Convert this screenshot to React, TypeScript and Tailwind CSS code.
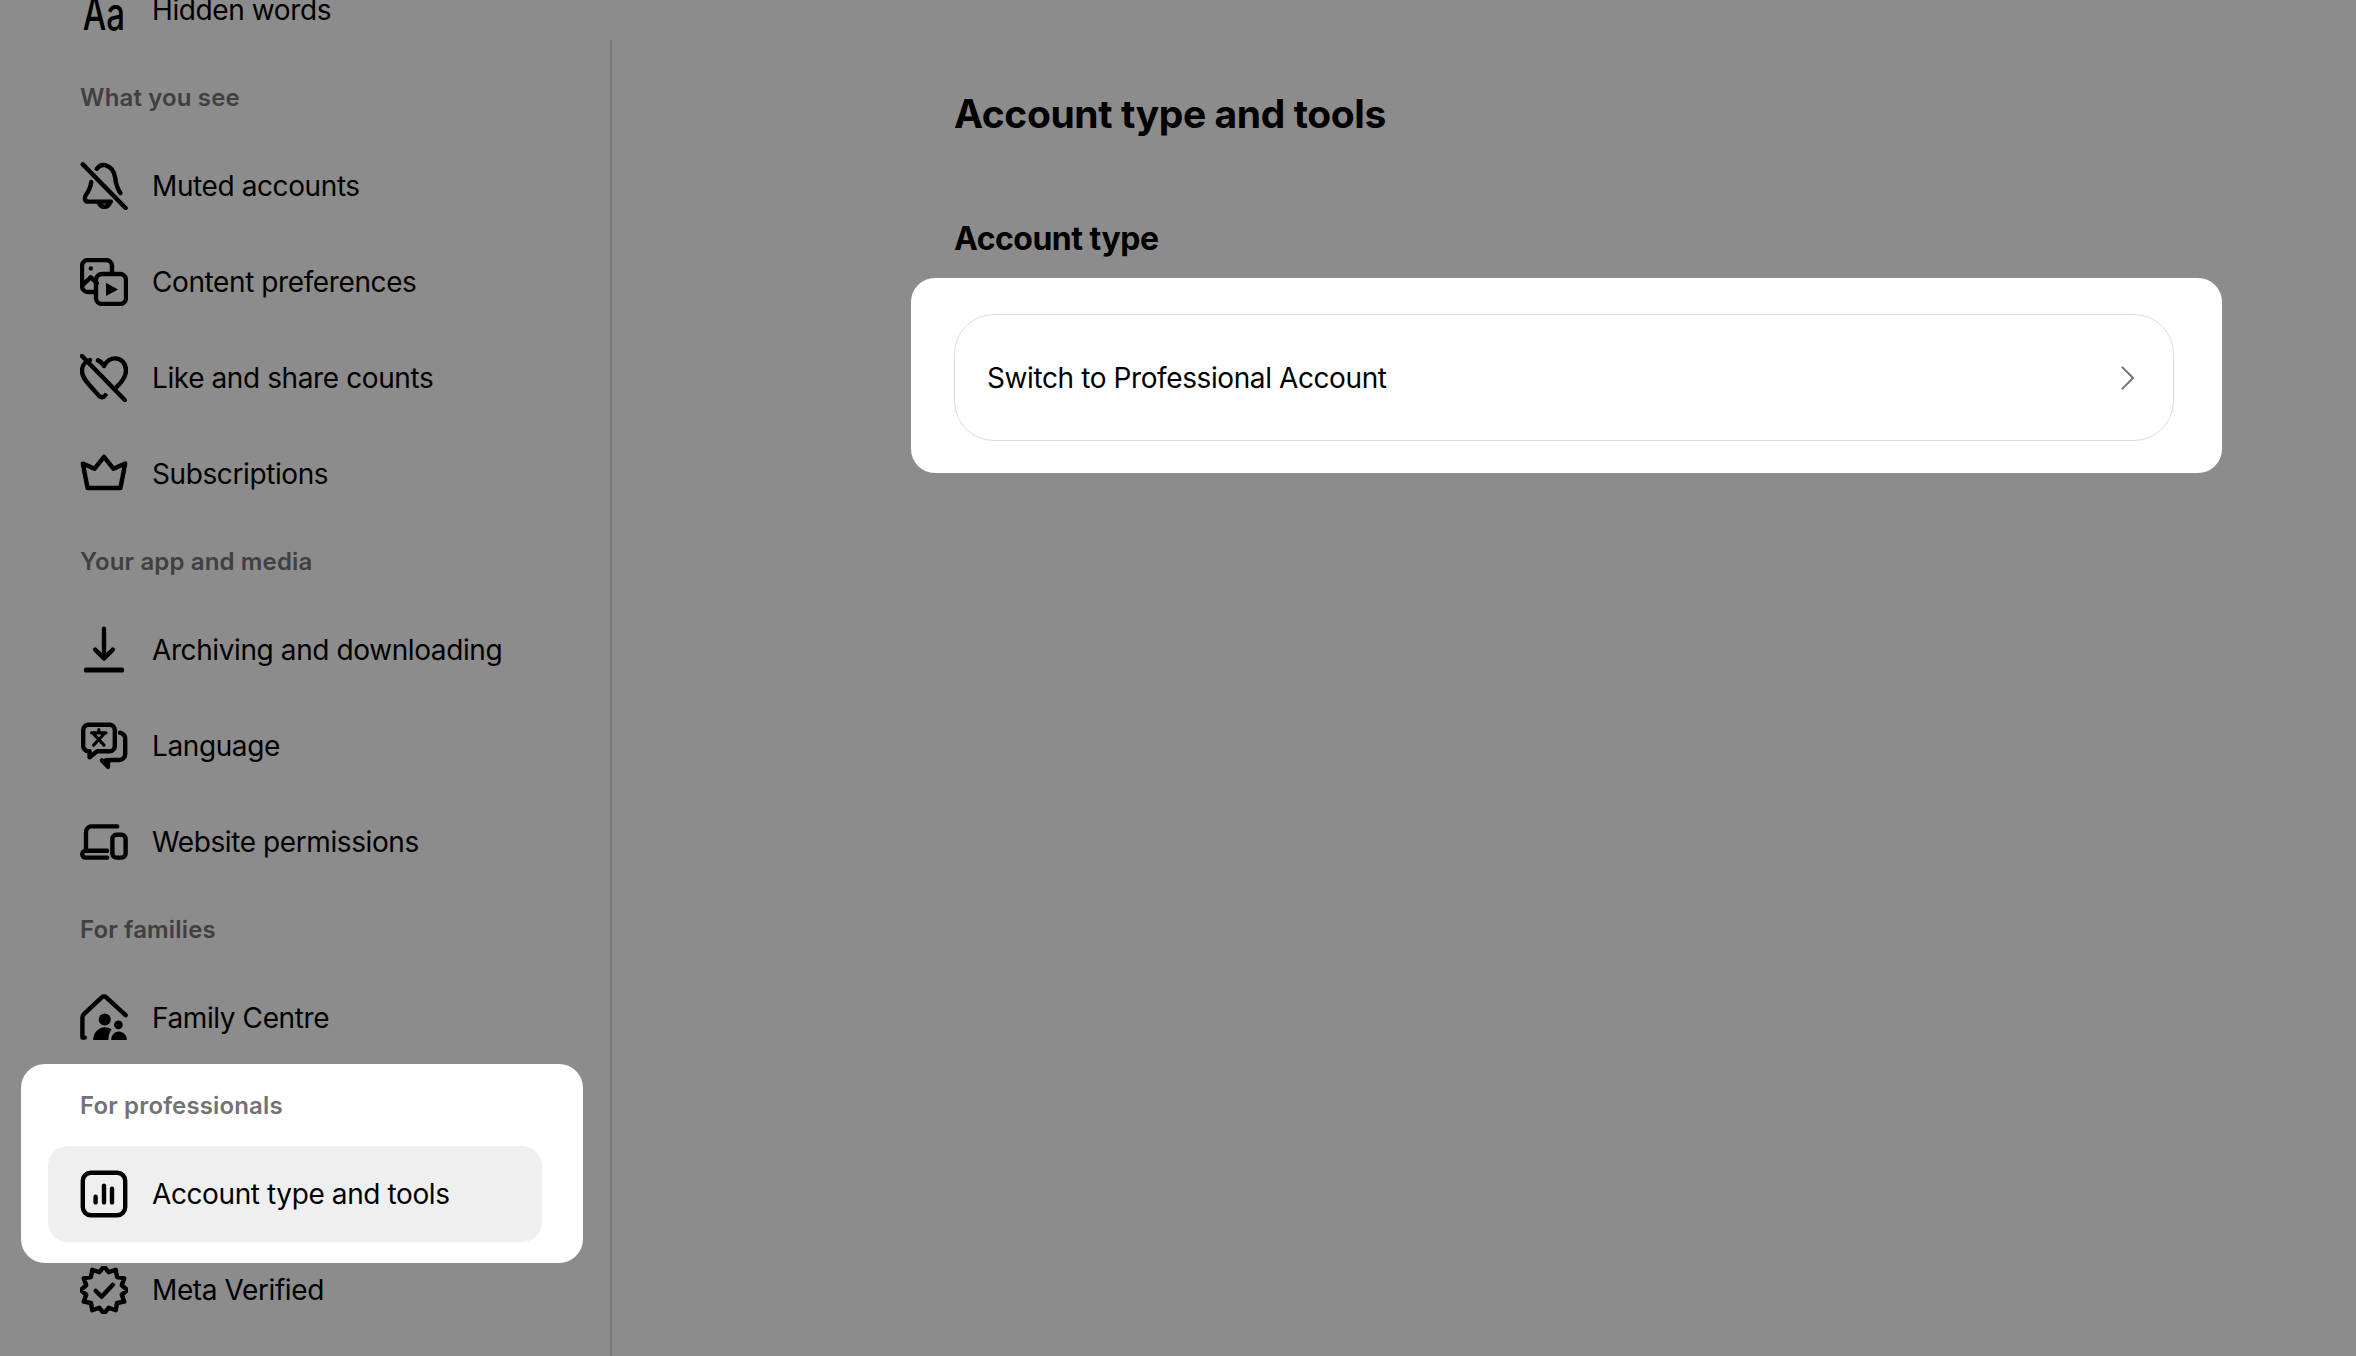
import type { ReactNode } from "react";

const font = { fontFamily: "Inter, 'Noto Sans', sans-serif" };

// 12 point scalloped badge for Meta Verified
const badgePoints = Array.from({ length: 24 }, (_, i) => {
  const r = i % 2 === 0 ? 11.7 : 9.2;
  const a = (i * Math.PI) / 12 - Math.PI / 2;
  return `${(12 + r * Math.cos(a)).toFixed(2)},${(12 + r * Math.sin(a)).toFixed(2)}`;
}).join(" ");

function Icon({ children }: { children: ReactNode }) {
  return (
    <svg viewBox="0 0 24 24" fill="none" stroke="black" strokeWidth={2.200} strokeLinecap="round" strokeLinejoin="round" className="w-12 h-12 shrink-0">
      {children}
    </svg>
  );
}

function Row({ icon, label, active }: { icon: ReactNode; label: string; active?: boolean }) {
  return (
    <div className={`flex items-center gap-6 h-24 w-[494px] pl-8 rounded-[20px] ${active ? "bg-[#efefef]" : ""}`}>
      {icon}
      <span className="text-[28px] tracking-[-0.4px] leading-[38px] text-black">{label}</span>
    </div>
  );
}

function Label({ text, light }: { text: string; light?: boolean }) {
  return (
    <div className={`h-20 flex items-center text-[24px] tracking-[0.15px] font-semibold ${light ? "text-[#737373]" : "text-[#404040]"}`}>
      {text}
    </div>
  );
}

const muted = (
  <Icon>
    <path d="M1.400 1.200 22.800 23" />
    <path d="M8.400 3.400C9.400 2 11 1.200 12.600 1.600c3 .8 4.600 3.400 5 6.400.3 2.800 1 5 2.600 7.600" />
    <path d="M5.600 10c-.3 2.800-1.400 4.800-2.800 6.800-.8 1.200-.4 3 1.200 3h11.400" />
    <path d="M9.400 20c.3 1.400 1.300 2.400 2.800 2.400s2.500-1 2.800-2.400" />
  </Icon>
);

const content = (
  <Icon>
    <path d="M7.600 17H4a3 3 0 0 1-3-3V4a3 3 0 0 1 3-3h9a3 3 0 0 1 3 3v3.600" />
    <path d="M1.400 13.400 5.400 9.600l3 3" />
    <circle cx="5.400" cy="5.200" r="1.100" fill="black" stroke="none" />
    <rect x="8" y="8" width="15" height="15" rx="3" />
    <path d="M13 12.400v6.600l6-3.300z" fill="black" stroke="none" />
  </Icon>
);

const likes = (
  <Icon>
    <path d="M1 1 22.400 23" />
    <path d="M5 3C2.800 3.600 1 5.600 1 8.400c0 3 1.800 5 3.800 7.200l4.600 5.200c1.200 1.200 2.400 1 3.300-.2" />
    <path d="M9 3.200c1 .4 2.200 1.400 3 2.800 1.200-2.400 3.200-3.800 5.600-3.800 3 0 5.400 2.400 5.400 6 0 3.200-1.800 5.600-4.800 8.400" />
  </Icon>
);

const crown = (
  <Icon>
    <path d="M12 3.400 16.800 9.400 22.600 6.800 20.200 19H3.800L1.400 6.800 7.200 9.400z" />
  </Icon>
);

const download = (
  <Icon>
    <path d="M12 1.400V16" />
    <path d="M7.600 11.800 12 16.200l4.400-4.400" />
    <path d="M3.200 22h17.600" strokeWidth={2.600} />
  </Icon>
);

const language = (
  <Icon>
    <path d="M4.200 1.400h10.600a2.600 2.600 0 0 1 2.600 2.600v8a2.600 2.600 0 0 1-2.600 2.600H8.600l-3.800 3V14.600H4.200a2.600 2.600 0 0 1-2.600-2.600V4a2.600 2.600 0 0 1 2.600-2.600z" />
    <path d="M20 5.400c1.500.2 2.600 1.400 2.600 3v7.600a3 3 0 0 1-3 3H16l-3 .1" />
    <path d="M11 19.200l3 3.200v-3.400" />
    <path d="M5.800 5.400h7.200M9.400 3.800v1.600M6.800 11.600 12 6M6.800 6l5.200 5.600" strokeWidth={1.600} />
  </Icon>
);

const devices = (
  <Icon>
    <path d="M3 16V7a2.800 2.800 0 0 1 2.800-2.800H18.600" />
    <path d="M13.600 16.400H2.800a1.500 1.500 0 0 0 0 3.400h10.800" />
    <rect x="16.200" y="8.400" width="6.600" height="11.400" rx="2" />
  </Icon>
);

const family = (
  <Icon>
    <path d="M22.800 10.600 13 1.600a1.500 1.500 0 0 0-2 0L2.200 9.800a3 3 0 0 0-1 2.200v9.800h1.200" />
    <circle cx="12.400" cy="12.800" r="3" fill="black" stroke="none" />
    <circle cx="19.200" cy="15.400" r="2.200" fill="black" stroke="none" />
    <path d="M6.600 23c0-3.600 2.600-6.400 5.800-6.400 1.400 0 2.600.4 3.400 1.200-1 1.200-1.600 3-1.600 5.200z" fill="black" stroke="none" />
    <path d="M15.600 23c0-2.400 1.600-4.200 3.800-4.200s4 1.800 4 4.200z" fill="black" stroke="none" />
  </Icon>
);

const tools = (
  <Icon>
    <rect x="1.400" y="1.400" width="21.200" height="21.200" rx="4" />
    <path d="M7.800 13.400v2.800M12 7.800v8.400M16 9.400v6.800" />
  </Icon>
);

const verified = (
  <Icon>
    <polygon points={badgePoints} />
    <path d="M7.800 12.400 10.800 15.400 16.400 9.400" />
  </Icon>
);

const aa = (
  <span className="w-12 h-12 shrink-0 flex items-center justify-center text-[46px] font-medium leading-none text-black scale-x-[0.72] translate-y-[3px]">Aa</span>
);

export default function App() {
  return (
    <div style={font} className="w-[2356px] h-[1356px] overflow-hidden flex bg-[#8c8c8c]">
      <aside className="w-[610px] shrink-0">
        <div className="-mt-[38px]">
          <div className="pl-12"><Row icon={aa} label="Hidden words" /></div>
          <div className="pl-20"><Label text="What you see" /></div>
          <div className="pl-12">
            <Row icon={muted} label="Muted accounts" />
            <Row icon={content} label="Content preferences" />
            <Row icon={likes} label="Like and share counts" />
            <Row icon={crown} label="Subscriptions" />
          </div>
          <div className="pl-20"><Label text="Your app and media" /></div>
          <div className="pl-12">
            <Row icon={download} label="Archiving and downloading" />
            <Row icon={language} label="Language" />
            <Row icon={devices} label="Website permissions" />
          </div>
          <div className="pl-20"><Label text="For families" /></div>
          <div className="pl-12"><Row icon={family} label="Family Centre" /></div>
          <div className="relative z-10 ml-[21px] w-[562px] -mt-[2px] -mb-[21px] pt-[2px] pb-[21px] bg-white rounded-[24px]">
            <div className="pl-[59px]"><Label text="For professionals" light /></div>
            <div className="pl-[27px]"><Row icon={tools} label="Account type and tools" active /></div>
          </div>
          <div className="pl-12"><Row icon={verified} label="Meta Verified" /></div>
        </div>
      </aside>
      <main className="flex-1 mt-10 border-l-2 border-[#7a7a7a] pl-[299px] pt-[50px]">
        <h1 className="pl-[43px] text-[39px] tracking-[-0.4px] leading-[48px] font-bold text-black">Account type and tools</h1>
        <h2 className="pl-[43px] mt-[81px] text-[32px] tracking-[-0.5px] leading-[40px] font-bold text-black">Account type</h2>
        <div className="mt-[19px] w-[1311px] pl-[43px] pr-[48px] pt-9 pb-8 bg-white rounded-[24px]">
          <div className="h-[127px] flex items-center justify-between pl-[32px] pr-[39px] border border-[#dbdbdb] rounded-[40px]">
            <span className="pt-px text-[28px] tracking-[-0.4px] leading-[38px] text-black">Switch to Professional Account</span>
            <svg viewBox="0 0 14 26" fill="none" stroke="#737373" strokeWidth={2.200} strokeLinecap="round" strokeLinejoin="round" className="w-[13px] h-6">
              <path d="M1.500 1.500 13 13 1.500 24.500" />
            </svg>
          </div>
        </div>
      </main>
    </div>
  );
}
